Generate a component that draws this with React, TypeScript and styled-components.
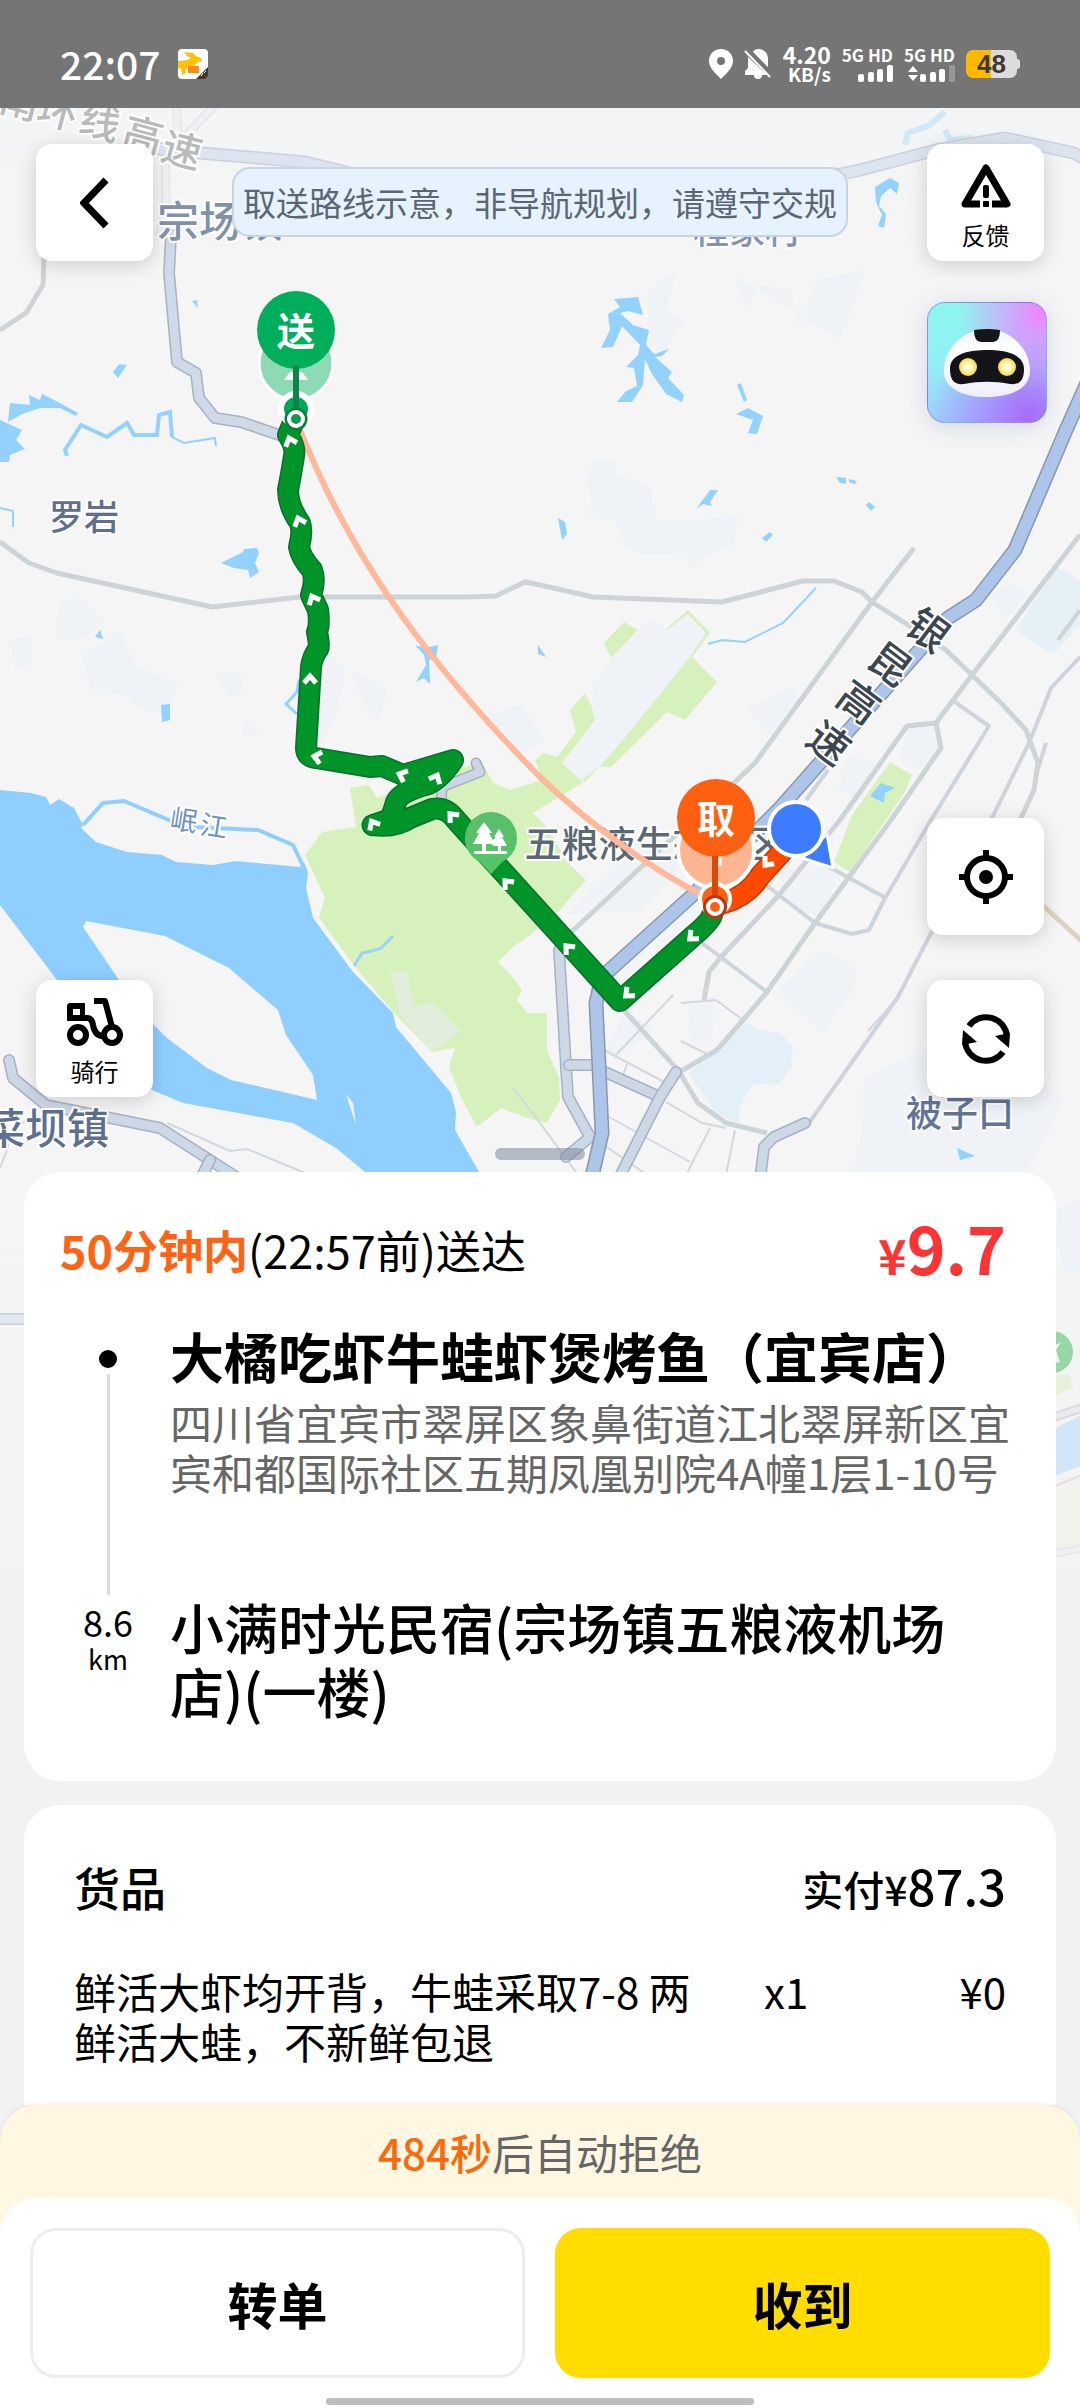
import React from "react";
import styled, { createGlobalStyle, css } from "styled-components";

const sans = `"Noto Sans CJK SC", "Noto Sans", sans-serif`;

const GlobalStyle = createGlobalStyle`
  *, *::before, *::after { box-sizing: border-box; }
  body { margin: 0; background: #f2f2f2; color: #000; font-family: ${sans}; }
  button { font-family: inherit; color: inherit; border: 0; padding: 0; cursor: pointer; }
  h1, h2, p, ol { margin: 0; padding: 0; font-weight: inherit; }
  svg { display: block; }
`;

/* ---------- frame ---------- */

const Page = styled.div`
  position: relative;
  display: flex;
  flex-direction: column;
  min-height: 100vh;
  overflow: hidden;
`;

const StatusBar = styled.header`
  position: relative;
  display: flex;
  align-items: center;
  justify-content: space-between;
  height: 108px;
  padding: 20px 60px 0;
  background: #757575;
  color: #fff;
`;

const StatusGroup = styled.div<{ $gap: number }>`
  display: flex;
  align-items: center;
  gap: ${(p) => p.$gap}px;
`;

const Clock = styled.time`
  margin-top: -3px;
  font-size: 39px;
  line-height: 40px;
  font-weight: 500;
`;

const Speed = styled.div`
  display: flex;
  flex-direction: column;
  align-items: flex-end;
  font-weight: 700;
  font-size: 19px;
  line-height: 20px;
`;

const SpeedValue = styled.span`
  font-size: 23px;
`;

const Signal = styled.div`
  display: flex;
  flex-direction: column;
  align-items: flex-end;
  gap: 2px;
  font-size: 17px;
  line-height: 16px;
  font-weight: 700;
`;

const Battery = styled.div`
  position: relative;
  width: 51px;
  height: 28px;
  margin-right: 3px;
  border-radius: 7px;
  background: linear-gradient(90deg, #ffb800 50%, #dcdcdc 50%);
  color: #3d3a33;
  font: 700 26px/28px "Liberation Sans", sans-serif;
  text-align: center;

  &::after {
    content: "";
    position: absolute;
    right: -3px;
    top: 9px;
    width: 3px;
    height: 10px;
    border-radius: 0 3px 3px 0;
    background: #dcdcdc;
  }
`;

/* ---------- map ---------- */

const MapCanvas = styled.svg`
  position: absolute;
  top: 108px;
  left: 0;
  width: 100%;
  height: 1600px;
`;

const MapLabel = styled.text<{ $size: number; $tone: string; $weight?: number }>`
  font-family: ${sans};
  font-size: ${(p) => p.$size}px;
  font-weight: ${(p) => p.$weight ?? 500};
  fill: ${(p) => p.$tone};
  stroke: #fff;
  stroke-width: 4px;
  stroke-linejoin: round;
  paint-order: stroke;
  text-anchor: middle;
`;

const PinLabel = styled.text`
  font-family: ${sans};
  font-size: 38px;
  font-weight: 700;
  fill: #fff;
  text-anchor: middle;
`;

const MapControls = styled.section`
  position: relative;
  display: flex;
  justify-content: space-between;
  height: 1064px;
  padding: 36px 33px 12px 36px;
`;

const ControlColumn = styled.div`
  display: flex;
  flex-direction: column;
  justify-content: space-between;
  padding-bottom: 63px;
`;

const ControlStack = styled.div<{ $gap: number }>`
  display: flex;
  flex-direction: column;
  gap: ${(p) => p.$gap}px;
`;

const MapCentre = styled.div`
  display: flex;
  flex-direction: column;
  align-items: center;
  justify-content: space-between;
  padding-top: 23px;
`;

const Notice = styled.p`
  padding: 0 9px;
  border: 2px solid #c6d5e3;
  border-radius: 18px;
  background: #e6f3fe;
  color: #5b6675;
  font-size: 33px;
  line-height: 66px;
  white-space: nowrap;
`;

const DragHandle = styled.div`
  width: 90px;
  height: 12px;
  border-radius: 6px;
  background: rgba(112, 128, 145, 0.5);
`;

const MapButton = styled.button<{ $labelled?: boolean }>`
  display: flex;
  flex-direction: column;
  align-items: center;
  justify-content: center;
  width: 117px;
  height: 117px;
  border-radius: 16px;
  background: #fff;
  box-shadow: 0 4px 20px rgba(0, 0, 0, 0.16);
  font-size: 24px;
  line-height: 30px;
  ${(p) =>
    p.$labelled &&
    css`
      justify-content: flex-start;
      gap: 10px;
      padding-top: 18px;
    `}
`;

const AssistantButton = styled.button`
  display: flex;
  align-items: center;
  justify-content: center;
  width: 120px;
  height: 121px;
  border: 1px solid rgba(110, 120, 220, 0.55);
  border-radius: 18px;
  background:
    radial-gradient(circle at 95% 8%, #ee84ff 0%, rgba(238, 132, 255, 0) 52%),
    radial-gradient(circle at 85% 95%, #a86cfb 0%, rgba(168, 108, 251, 0) 65%),
    linear-gradient(170deg, #8df8ec 0%, #93eef6 45%, #a3c4ff 100%);
  box-shadow: 0 4px 24px rgba(90, 110, 160, 0.2);
`;

/* ---------- cards ---------- */

const OrderCard = styled.section`
  position: relative;
  margin: 0 24px 24px;
  padding: 44px 46px 58px 36px;
  border-radius: 36px;
  background: #fff;
`;

const OrderHead = styled.div`
  display: flex;
  align-items: center;
  justify-content: space-between;
  height: 68px;
  margin-bottom: 38px;
  padding-right: 4px;
`;

const Deadline = styled.p`
  font-size: 45px;
  line-height: 60px;
`;

const DeadlineMark = styled.strong`
  color: #ff6313;
  font-weight: 700;
`;

const Fee = styled.p`
  color: #fc3434;
  font-weight: 700;
  font-size: 66px;
  line-height: 68px;
`;

const FeeSign = styled.span`
  font-size: 48px;
`;

const Route = styled.ol`
  list-style: none;
`;

const Stop = styled.li`
  display: grid;
  grid-template-columns: 96px 1fr;
  column-gap: 14px;
`;

const Rail = styled.div`
  display: flex;
  flex-direction: column;
  align-items: center;
`;

const RailDot = styled.span`
  width: 18px;
  height: 18px;
  margin: 28px 0 6px;
  border-radius: 50%;
  background: #000;
`;

const RailLine = styled.span`
  flex: 1;
  width: 3px;
  background: #dcdcdc;
`;

const Distance = styled.span`
  padding-top: 6px;
  font-size: 36px;
  line-height: 40px;
`;

const DistanceUnit = styled.span`
  font-size: 27px;
  line-height: 36px;
`;

const PickupBody = styled.div`
  padding-bottom: 98px;
`;

const PickupName = styled.h1`
  margin-bottom: 7px;
  font-size: 54px;
  line-height: 68px;
  font-weight: 700;
`;

const PickupAddress = styled.p`
  color: #666;
  font-size: 42px;
  line-height: 50px;
`;

const DropName = styled.h2`
  font-size: 54px;
  line-height: 64px;
  font-weight: 500;
`;

const GoodsCard = styled.section`
  position: relative;
  flex: 1;
  margin: 0 24px;
  padding: 50px 50px 24px 50px;
  border-radius: 36px 36px 0 0;
  background: #fff;
`;

const GoodsHead = styled.div`
  display: flex;
  align-items: baseline;
  justify-content: space-between;
  margin-bottom: 48px;
  font-weight: 500;
  line-height: 60px;
`;

const GoodsTitle = styled.h2`
  font-size: 46px;
`;

const Paid = styled.p`
  font-size: 41px;
`;

const PaidAmount = styled.span`
  font-size: 49px;
`;

const GoodsTable = styled.table`
  width: 100%;
  border-collapse: collapse;
  font-size: 42px;
  line-height: 50px;
  text-align: left;

  td {
    padding: 0;
    vertical-align: top;
  }
`;

const NameCell = styled.td`
  width: 690px;

  && {
    padding-right: 50px;
  }
`;

const PriceCell = styled.td`
  text-align: right;
`;

/* ---------- footer ---------- */

const Footer = styled.footer`
  position: relative;
  border-radius: 36px 36px 0 0;
  background: #fff7e1;
  box-shadow: 0 -2px 4px rgba(0, 0, 0, 0.05);
`;

const Countdown = styled.p`
  color: #666;
  font-size: 42px;
  line-height: 93px;
  text-align: center;
`;

const CountdownTime = styled.span`
  color: #fa6a0d;
  font-weight: 500;
`;

const Actions = styled.div`
  display: grid;
  grid-template-columns: 1fr 1fr;
  gap: 0 30px;
  padding: 30px 30px 3px;
  border-radius: 36px 36px 0 0;
  background: #fff;
`;

const ActionButton = styled.button<{ $primary?: boolean }>`
  height: 150px;
  border-radius: 26px;
  background: ${(p) => (p.$primary ? "#ffdd00" : "#fff")};
  box-shadow: ${(p) => (p.$primary ? "none" : "inset 0 0 0 3px #ededed")};
  font-size: 50px;
  font-weight: 700;
`;

const HomeBar = styled.div`
  grid-column: 1 / -1;
  justify-self: center;
  width: 42%;
  height: 7px;
  margin-top: 20px;
  border-radius: 4px;
  background: #bdbdbd;
`;

/* ---------- icons ---------- */

const AppBadge = () => (
  <svg width="30" height="30" viewBox="0 0 30 30" aria-hidden="true">
    <rect width="30" height="30" rx="4" fill="#fff" />
    <path d="M0 12 L9 11 13 9 9 7 6 3 15 4 18 7 23 9 24 12 20 13 17 16 10 19 7 21 8 24 4 26 3 20 0 19Z" fill="#ffc20a" />
    <rect x="10" y="17" width="11" height="7" fill="#ff8a17" />
    <path d="M30 18 V26 a4 4 0 0 1 -4 4 H18Z" fill="#4a3326" />
    <path d="M23 27 l2-3 M26 24 l2-2" stroke="#fff" strokeWidth="1" />
  </svg>
);

const PlaceIcon = () => (
  <svg width="24" height="30" viewBox="0 0 24 30" aria-hidden="true">
    <path
      fillRule="evenodd"
      d="M12 0C5 0 0 5 0 12c0 7 7 13 12 18 5-5 12-11 12-18C24 5 19 0 12 0Zm0 8a4 4 0 1 1 0 8 4 4 0 0 1 0-8Z"
      fill="#fff"
    />
  </svg>
);

const MutedIcon = () => (
  <svg width="28" height="30" viewBox="0 0 28 30" aria-hidden="true">
    <path d="M14 0c6 0 10 4 10 10v8L9 3c1-2 3-3 5-3ZM4 8l19 18h-5a4 4 0 0 1-8 0H1v-4l3-3Z" fill="#fff" />
    <path d="M1 2 L26 28" stroke="#fff" strokeWidth="2" />
  </svg>
);

const SignalBars = ({ arrows }: { arrows?: boolean }) => (
  <svg width="48" height="17" viewBox="0 0 48 17" aria-hidden="true">
    <g fill="#fff">
      <rect x="13" y="9" width="6" height="8" rx="2" />
      <rect x="23" y="7" width="6" height="10" rx="2" />
      <rect x="32" y="4" width="6" height="13" rx="2" />
      <rect x="42" y="0" width="6" height="17" rx="2" opacity={arrows ? 0.25 : 1} />
      {arrows && <path d="M6 1 L11 7 H1Z M6 16 L1 10 H11Z" />}
    </g>
  </svg>
);

const BackIcon = () => (
  <svg width="30" height="52" viewBox="0 0 30 52" aria-hidden="true">
    <path d="M26 3 L4 26 26 49" fill="none" stroke="#000" strokeWidth="7" />
  </svg>
);

const FeedbackIcon = () => (
  <svg width="52" height="48" viewBox="0 0 52 48" aria-hidden="true">
    <path d="M20 42 H5 L26 6 47 42 H32" fill="none" stroke="#000" strokeWidth="7" strokeLinejoin="round" />
    <rect x="23" y="23" width="6" height="13" rx="2" />
    <rect x="23" y="39" width="6" height="6" rx="1" />
  </svg>
);

const ScooterIcon = () => (
  <svg width="56" height="48" viewBox="0 0 56 48" aria-hidden="true">
    <path fillRule="evenodd" d="M2 5 H18 V23 H0 V7Z M6 11 V17 H13 V11Z" />
    <g fill="none" stroke="#000" strokeWidth="6">
      <circle cx="11" cy="37" r="8" />
      <circle cx="45" cy="37" r="8" />
      <path d="M27 3 H38 L45 29" strokeLinejoin="round" />
      <path d="M16 20 H20 Q25 20 26 27 Q28 39 38 38" />
    </g>
  </svg>
);

const LocateIcon = () => (
  <svg width="54" height="54" viewBox="-27 -27 54 54" aria-hidden="true">
    <circle r="19" fill="none" stroke="#000" strokeWidth="6" />
    <circle r="7" />
    <path d="M0 -27 V-19 M0 19 V27 M-27 0 H-19 M19 0 H27" stroke="#000" strokeWidth="6" />
  </svg>
);

const RefreshIcon = () => (
  <svg width="50" height="50" viewBox="-25 -25 50 50" aria-hidden="true">
    {[0, 180].map((turn) => (
      <g key={turn} transform={`rotate(${turn})`}>
        <path d="M-17 -13 A21 21 0 0 1 21 -3" fill="none" stroke="#000" strokeWidth="6" />
        <path d="M9 -3 L24 -6 23 9Z" />
      </g>
    ))}
  </svg>
);

const RobotIcon = () => (
  <svg width="88" height="68" viewBox="0 0 88 68" aria-hidden="true">
    <defs>
      <radialGradient id="eye">
        <stop offset="0.3" stopColor="#fffde0" />
        <stop offset="1" stopColor="#f8da3c" />
      </radialGradient>
      <linearGradient id="head" x2="0" y2="1">
        <stop offset="0" stopColor="#eef4ff" />
        <stop offset="0.3" stopColor="#fff" />
        <stop offset="1" stopColor="#f0eeff" />
      </linearGradient>
    </defs>
    <path d="M44 0C66 0 86 18 87 40c1 19-18 28-43 28S0 59 1 40C2 18 22 0 44 0Z" fill="url(#head)" />
    <path d="M31 1 Q44 -1 57 1 Q57 13 50 13 H38 Q31 13 31 1Z" fill="#15161a" />
    <path d="M44 21C60 21 81 24 81 40c0 12-5 16-14 15-16-3-30-3-46 0C12 56 7 52 7 40c0-16 21-19 37-19Z" fill="#141418" />
    <circle cx="25" cy="38" r="9" fill="url(#eye)" />
    <circle cx="64" cy="38" r="9" fill="url(#eye)" />
  </svg>
);

/* ---------- map drawing ---------- */

type RoadProps = { d: string; w: number; fill: string; edge: string };

const Road = ({ d, w, fill, edge }: RoadProps) => (
  <g fill="none" strokeLinejoin="round" strokeLinecap="round">
    <path d={d} stroke={edge} strokeWidth={w} />
    <path d={d} stroke={fill} strokeWidth={w - 3} />
  </g>
);

const minorRoads = [
  "M44 255 L43 285 26 313 0 330",
  "M0 542 L29 563 57 573 212 607 300 597 465 597 496 596 525 582 540 585 593 597 722 602 803 581 834 581 862 592 872 602 905 623 946 650 972 675 1001 703 1026 730 1038 763 1034 790 1020 820",
  "M914 548 L872 602 755 763 735 782 667 843 566 937",
  "M1080 535 L972 675 936 723 941 748 891 820 815 923 767 992 743 1020 717 1050 678 1073",
  "M621 1007 L678 1070 698 1103 726 1123 767 1133",
  "M936 723 L907 726 840 820 779 895 721 957 709 972 704 1000",
];

const lanes = [
  "M955 702 L989 726 931 820 884 900 869 930 852 934 815 923 779 895 760 880",
  "M1080 657 L1051 688 1029 743 991 820 931 933 898 997 809 1123",
  "M1046 743 L1036 775",
  "M702 943 L767 992",
  "M829 867 L886 898",
  "M828 770 L806 800",
  "M1058 640 L1080 610",
];

const alleys = [
  "M673 995 L616 1055",
  "M681 1003 L716 1000 743 1020",
  "M681 1041 L709 1055",
  "M604 1050 L664 1082",
  "M627 1064 L622 1078",
  "M666 1102 L702 1123 726 1128",
  "M710 1128 L686 1175",
  "M735 1130 L726 1175",
  "M609 1117 L690 1162",
  "M604 1145 L647 1175",
  "M540 1123 L578 1175",
  "M513 1088 L540 1123",
  "M167 1123 L230 1151 247 1149 310 1175",
  "M0 1168 L7 1150 12 1130 30 1118",
  "M900 995 L868 1031",
];

const trunkRoads = [
  "M559 950 L566 1067 568 1097 590 1137 566 1157",
  "M569 1065 L593 1065",
  "M605 1072 L660 1097",
  "M676 1072 L660 1097 618 1180",
  "M760 1180 L764 1147 774 1137 805 1123",
  "M9 1060 L13 1078 46 1105 160 1128 238 1178",
  "M210 1160 L200 1180",
];

const ponds = [
  "M0 420 L22 430 16 440 25 449 10 455 9 462 0 462Z",
  "M10 403 L30 405 29 395 40 400 42 394 58 402 78 413 76 416 60 408 40 408 22 414 8 422Z",
  "M113 372 L119 364 127 365 118 378Z",
  "M221 563 L243 552 244 549 257 548 259 553 255 563 259 572 250 578 248 570 234 568Z",
  "M415 645 L425 648 438 645 436 658 429 660 430 684 424 678 416 682 426 665 424 655Z",
  "M161 705 L170 704 170 720 162 722Z",
  "M95 637 L100 630 103 639Z",
  "M192 301 L197 300 198 308Z",
  "M614 299 L638 297 643 315 628 311 620 313 633 325 649 330 646 345 654 354 669 349 662 356 655 357 672 372 668 378 684 395 682 402 666 394 652 374 645 359 643 385 632 402 617 402 626 391 637 386 634 368 626 367 638 355 640 345 622 326 613 347 601 348 610 330 608 314 620 307Z",
  "M736 414 L748 408 763 416 757 434 748 433 753 420Z",
  "M737 385 L741 383 747 400 744 402Z",
  "M696 509 L710 490 718 490 710 502 712 506 703 504Z",
  "M836 477 L846 478 846 484 840 483Z M849 479 L857 481 855 484 849 482Z",
  "M866 505 L869 502 875 507 871 511Z",
  "M762 538 L770 532 773 535 766 542Z",
  "M558 518 L565 522 567 534 562 540Z",
  "M875 187 L890 178 899 183 897 194 890 188 881 196 879 206 886 214 884 228 878 226 882 215 876 202Z",
  "M957 1148 L975 1156 960 1160Z",
  "M538 645 L546 657 538 654Z",
];

const blocks = [
  "M595 460 L615 460 617 475 650 485 655 522 700 520 738 515 735 545 700 557 692 570 685 553 640 555 625 545 615 520 588 515 592 500 585 480Z",
  "M650 290 L675 272 667 310 684 320 665 350 650 345Z M735 275 L745 310 760 285 790 290 800 330 815 280 865 270 855 300 840 340Z",
  "M82 655 L120 630 135 665 180 685 165 715 140 708 125 695 90 690Z",
  "M60 600 L78 598 105 620 80 640 58 640Z M10 640 L30 635 30 665 15 668Z",
  "M330 655 L345 670 335 720 315 750 322 690Z M350 670 L388 690 380 720 365 705Z",
  "M215 675 L240 672 245 690 230 697Z M245 720 L262 735 243 735Z",
  "M490 715 L520 705 545 740 515 760Z",
  "M747 708 L795 687 800 700 770 735Z",
  "M990 595 L1010 583 1028 592 1005 620Z",
  "M848 755 L880 765 860 800 838 790Z M912 722 L938 725 940 750 920 770 900 755Z",
  "M822 950 L853 967 855 987 822 1033 778 990Z",
  "M688 1005 L714 1000 712 1045 690 1040Z M625 1010 L655 1030 615 1060 607 1050Z",
  "M780 870 L835 865 835 885 818 918 785 900Z",
  "M566 915 L640 845 700 850 640 910Z",
  "M864 1077 L927 1050 965 1075 1040 1080 1062 1100 1050 1130 1020 1180 850 1180 860 1140Z",
  "M1056 1210 L1080 1200 1080 1275 1062 1270Z",
];

const chevrons: Array<[number, number, number]> = [
  [290, 441, -20],
  [299, 521, -20],
  [313, 599, -25],
  [310, 679, 0],
  [317, 757, -78],
  [402, 775, -68],
  [436, 778, 25],
  [373, 824, -30],
  [452, 816, -42],
  [507, 883, -42],
  [568, 948, -42],
  [628, 994, -132],
  [692, 937, -132],
];

const riverPath =
  "M0 790 L31 793 46 797 50 805 59 799 74 808 83 825 81 828 96 842 127 852 162 855 176 862 213 865 236 861 300 867 304 862 308 872 306 888 313 918 353 972 393 1013 396 1027 451 1093 456 1112 455 1130 479 1172 490 1200 400 1200 365 1172 336 1148 293 1123 183 1103 152 1090 57 980 0 905Z";

const parkPath =
  "M350 788 L369 785 377 798 440 775 482 762 493 783 510 790 543 780 535 760 543 753 557 757 576 732 570 710 585 693 592 707 595 720 562 763 583 782 533 813 547 827 568 863 586 880 557 913 530 935 513 947 498 962 513 977 522 990 517 1000 527 1013 547 1013 547 1050 559 1077 560 1100 547 1123 527 1118 501 1108 477 1127 461 1097 449 1067 455 1048 432 1052 394 1013 355 967 319 918 325 898 305 855 322 832 356 827Z";

const routePath =
  "M295 418 L288 435 Q296 447 294 456 Q291 475 288 490 Q288 506 300 523 Q303 532 299 547 Q301 558 312 570 Q316 580 311 595 L318 610 Q320 625 317 632 Q320 647 318 649 Q312 658 311 667 L306 748 Q306 757 316 758 L370 767 382 766 403 775 453 760 Q440 780 426 785 Q400 792 396 802 Q392 818 388 820 Q370 826 373 825 Q395 828 410 818 L432 809 Q446 806 456 820 L620 1001 692 937 Q710 922 712 915";

const MapDrawing = () => (
  <MapCanvas viewBox="0 108 1080 1600" preserveAspectRatio="xMidYMin slice" role="img" aria-label="取送路线地图">
    <defs>
      <linearGradient id="land" x2="0" y2="1">
        <stop offset="0" stopColor="#f3f4f5" />
        <stop offset="0.1" stopColor="#f5f5f5" />
        <stop offset="0.66" stopColor="#f5f5f5" />
        <stop offset="0.95" stopColor="#f2f2f2" />
      </linearGradient>
      <linearGradient id="tree" x2="0" y2="1">
        <stop offset="0" stopColor="#5bbd6c" />
        <stop offset="1" stopColor="#53c766" />
      </linearGradient>
    </defs>
    <rect y="108" width="1080" height="1600" fill="url(#land)" />

    <g fill="#eff2f6">
      {blocks.map((d) => (
        <path key={d} d={d} />
      ))}
    </g>
    <path d="M1057 568 L1080 580 1080 625 1053 655 1015 630Z" fill="#e5f0f7" />
    <path d="M747 1022 L760 1030 781 1033 793 1047 791 1067 778 1085 753 1083 740 1107 738 1123 716 1113 688 1073 722 1047Z" fill="#e4f0f7" />

    <path d={riverPath} fill="#8fcfff" />
    <path
      d="M86 921 L165 936 229 968 278 1010 286 1035 313 1075 317 1100 231 1080 207 1068 167 1038 153 1024 119 980 83 927Z M346 1094 L353 1103 356 1125Z"
      fill="#f5f5f5"
    />
    <path d="M83 825 L103 803 124 801 169 820 193 827 258 830 293 845 304 868" fill="none" stroke="#8fcfff" strokeWidth="4" />

    <g fill="#d7f1bd">
      <path d={parkPath} />
      <path d="M604 643 L624 622 638 630 611 658Z" />
      <path d="M667 628 L688 610 710 633 692 657 717 682 685 720 667 712 611 767 599 767 585 782 575 775Z" />
      <path d="M890 762 L912 775 905 792 850 872 834 862 852 815Z" />
    </g>
    <path d="M652 618 L667 630 688 614 706 633 690 657 623 740 599 767 581 780 562 763 595 720 592 687 614 657Z" fill="#eff2f7" />
    <path d="M391 972 L406 970 414 1007 432 1002 461 1031 432 1052 400 1015Z" fill="#e0eedb" />
    <path d="M354 966 L362 953 380 949 393 936" fill="none" stroke="#99d2f2" strokeWidth="3" />

    <g fill="#93d2fd">
      {ponds.map((d) => (
        <path key={d} d={d} />
      ))}
      <path d="M881 783 L895 788 885 793 884 803 870 796Z" />
    </g>
    <g fill="none" stroke="#93d2fd">
      <path d="M67 456 L65 450 81 425 107 437 127 423 134 435 157 435 159 415 170 412 172 437" strokeWidth="4" />
      <path d="M172 437 L184 443 215 438 216 446 M0 508 L13 511 13 527 M816 588 L783 623 745 642 722 640 708 644" strokeWidth="2" />
      <path d="M299 680 L297 692 286 704 297 714" strokeWidth="3" />
      <path d="M905 145 L908 133 928 126 945 112 M945 130 L950 140 972 138" strokeWidth="6" opacity="0.35" />
    </g>

    <g fill="none" stroke="#d3d7e0" strokeWidth="2">
      {alleys.map((d) => (
        <path key={d} d={d} />
      ))}
    </g>
    <g fill="none" stroke="#cdd4db" strokeWidth="4" strokeLinejoin="round">
      {lanes.map((d) => (
        <path key={d} d={d} />
      ))}
    </g>
    <g fill="none" stroke="#cdd4d8" strokeWidth="5" strokeLinejoin="round">
      {minorRoads.map((d) => (
        <path key={d} d={d} />
      ))}
    </g>
    <path d="M1040 903 L1084 943" stroke="#ddd3c2" strokeWidth="5" />

    <g opacity="0.5">
      <Road d="M176 100 L178 140 M216 104 L182 140 M165 150 L166 200 160 235" w={9} fill="#eceef2" edge="#d5d9df" />
    </g>
    <Road d="M150 148 L200 153 305 162 420 190 600 205 740 195 860 170 936 150 1005 138 1074 153 1090 162" w={13} fill="#dde4f0" edge="#cbd1dc" />
    <Road d="M171 235 L169 273 177 362 196 373 199 398 215 418 241 422 285 437" w={12} fill="#cfdae8" edge="#a7b2c2" />
    <Road d="M476 763 L480 772 442 787 441 810" w={11} fill="#cdd5e4" edge="#a5adbd" />
    {trunkRoads.map((d) => (
      <Road key={d} d={d} w={12} fill="#cdd8e7" edge="#a5b2c6" />
    ))}
    <Road
      d="M1092 372 L1066 430 1015 550 976 600 948 618 781 807 695 893 602 977 596 1003 599 1067 602 1133 590 1185"
      w={15}
      fill="#adc5e8"
      edge="#8896b0"
    />

    <MapLabel $size={35} $tone="#5f6f8c" x="84" y="530">罗岩</MapLabel>
    <MapLabel $size={42} $tone="#8291aa" x="220" y="237">宗场镇</MapLabel>
    <MapLabel $size={36} $tone="#8594ad" x="747" y="244">程家村</MapLabel>
    <MapLabel $size={42} $tone="#5d7090" x="46" y="1144">菜坝镇</MapLabel>
    <MapLabel $size={36} $tone="#627596" x="960" y="1127">被子口</MapLabel>
    <MapLabel $size={37} $tone="#5c6874" x="654" y="858">五粮液生态景区</MapLabel>
    {([["岷", 184, 820], ["江", 214, 826]] as const).map(([char, x, y]) => (
      <MapLabel key={char} $size={27} $tone="#6f93bd" $weight={400} transform={`translate(${x} ${y}) rotate(9)`} y="10">
        {char}
      </MapLabel>
    ))}
    {([["南", 20, 102], ["环", 58, 112], ["线", 100, 123], ["高", 143, 136], ["速", 182, 151]] as const).map(([char, x, y]) => (
      <MapLabel key={char} $size={40} $tone="#b8babc" transform={`translate(${x} ${y}) rotate(15)`} y="14">
        {char}
      </MapLabel>
    ))}
    {([["银", 928, 630], ["昆", 890, 664], ["高", 859, 702], ["速", 829, 743]] as const).map(([char, x, y]) => (
      <MapLabel key={char} $size={41} $tone="#3b4650" transform={`translate(${x} ${y}) rotate(37)`} y="15">
        {char}
      </MapLabel>
    ))}

    <path d="M298 425 C345 545 415 650 540 777 C590 825 650 868 705 897" fill="none" stroke="#ffb899" strokeWidth="6" />

    <g fill="none" strokeLinejoin="round" strokeLinecap="round">
      <path d="M724 903 Q748 896 760 876 L790 843" stroke="#c23a08" strokeWidth="22" />
      <path d="M724 903 Q748 896 760 876 L790 843" stroke="#ff4a00" strokeWidth="19" />
      <path d={routePath} stroke="#0a6f2e" strokeWidth="22" />
      <path d={routePath} stroke="#009429" strokeWidth="19" />
    </g>
    <g fill="none" stroke="#fff" strokeWidth="5">
      {chevrons.map(([x, y, turn]) => (
        <path key={`${x}-${y}`} d="M-6 4 L0 -3 6 4" transform={`translate(${x} ${y}) rotate(${turn})`} />
      ))}
      <path d="M-6 4 L0 -3 6 4" transform="translate(767 863) rotate(-140)" />
    </g>

    <path d="M491 812 a26 26 0 0 1 26 26 q0 16 -15 24 l-11 12 -11 -12 q-15 -8 -15 -24 a26 26 0 0 1 26 -26Z" fill="url(#tree)" />
    <g fill="#fff">
      <path d="M484 822 L492 833 489 833 495 844 486 844 486 851 482 851 482 844 473 844 479 833 476 833Z" />
      <path d="M499 829 L504 837 502 837 507 846 501 846 501 851 498 851 498 846 494 846 490 843 496 837 494 837Z" />
      <rect x="474" y="851" width="33" height="3" />
    </g>

    <g>
      <path d="M827 834 L833 868 802 858Z" fill="#3d7bff" stroke="#fff" strokeWidth="3" strokeLinejoin="round" />
      <circle cx="796" cy="829" r="27" fill="#3d7bff" stroke="#fff" strokeWidth="4" />
    </g>

    <g>
      <circle cx="296" cy="363" r="37" fill="#8edab5" stroke="#fff" strokeWidth="3" />
      <path d="M284 380 L290 372 302 372 308 380Z" fill="#fff" />
      <circle cx="296" cy="409" r="15" fill="#00a857" stroke="#fff" strokeWidth="6" />
      <circle cx="296" cy="330" r="39" fill="#00ae5b" />
      <PinLabel x="296" y="345">送</PinLabel>
      <path d="M296 366 V410" stroke="#0a8548" strokeWidth="6" />
      <circle cx="296" cy="419" r="8" fill="#0b9a50" stroke="#0a7d41" strokeWidth="7" />
      <circle cx="296" cy="419" r="7" fill="#0b9a50" stroke="#fff" strokeWidth="4" />
    </g>

    <g>
      <circle cx="716" cy="850" r="38" fill="#ffb592" stroke="#fff" strokeWidth="4" />
      <path d="M720 856 V866" stroke="#fff" strokeWidth="3" />
      <circle cx="715" cy="899" r="15" fill="#ff5f10" stroke="#fff" strokeWidth="4" />
      <circle cx="716" cy="818" r="39" fill="#ff5f10" />
      <PinLabel x="716" y="833">取</PinLabel>
      <path d="M715 856 V900" stroke="#d64b0c" strokeWidth="6" />
      <circle cx="715" cy="907" r="9" fill="#ff5f10" stroke="#b23a18" strokeWidth="6" />
      <circle cx="715" cy="907" r="7" fill="#ff5f10" stroke="#fff" strokeWidth="4" />
    </g>

    <Road d="M-5 1319 L60 1319" w={12} fill="#e1e8f0" edge="#c5ccd5" />
    <circle cx="1052" cy="1352" r="21" fill="#96d7a4" />
    <path d="M1050 1348 L1061 1342 1056 1350 1060 1362 1050 1364Z" fill="#e9f6ea" />
    <path d="M1040 1378 L1070 1374 1073 1388 1040 1402Z" fill="#e6f3da" />
    <path d="M1040 1436 L1080 1416 1080 1466 1040 1482Z" fill="#d0e5f7" />
    <Road d="M1040 1422 L1090 1405" w={9} fill="#e8ebef" edge="#d3d7dc" />
    <path d="M1040 1492 L1080 1476" stroke="#e5dfd8" strokeWidth="2" />
    <path d="M1040 1496 L1080 1484 1080 1544 1040 1550Z" fill="#f0f3ea" />
    <Road d="M1040 1556 L1090 1547" w={8} fill="#eff0f2" edge="#e3e5e8" />
  </MapCanvas>
);

/* ---------- screen ---------- */

export default function App() {
  return (
    <>
      <GlobalStyle />
      <Page>
        <MapDrawing />

        <StatusBar>
          <StatusGroup $gap={17}>
            <Clock>22:07</Clock>
            <AppBadge />
          </StatusGroup>
          <StatusGroup $gap={11}>
            <PlaceIcon />
            <MutedIcon />
            <Speed>
              <SpeedValue>4.20</SpeedValue>
              <span>KB/s</span>
            </Speed>
            <Signal>
              5G HD
              <SignalBars />
            </Signal>
            <Signal>
              5G HD
              <SignalBars arrows />
            </Signal>
            <Battery>48</Battery>
          </StatusGroup>
        </StatusBar>

        <MapControls>
          <ControlColumn>
            <MapButton aria-label="返回">
              <BackIcon />
            </MapButton>
            <MapButton $labelled>
              <ScooterIcon />
              骑行
            </MapButton>
          </ControlColumn>
          <MapCentre>
            <Notice>取送路线示意，非导航规划，请遵守交规</Notice>
            <DragHandle />
          </MapCentre>
          <ControlColumn>
            <ControlStack $gap={41}>
              <MapButton $labelled>
                <FeedbackIcon />
                反馈
              </MapButton>
              <AssistantButton aria-label="智能助手">
                <RobotIcon />
              </AssistantButton>
            </ControlStack>
            <ControlStack $gap={45}>
              <MapButton aria-label="定位">
                <LocateIcon />
              </MapButton>
              <MapButton aria-label="刷新">
                <RefreshIcon />
              </MapButton>
            </ControlStack>
          </ControlColumn>
        </MapControls>

        <OrderCard>
          <OrderHead>
            <Deadline>
              <DeadlineMark>50分钟内</DeadlineMark>(22:57前)送达
            </Deadline>
            <Fee>
              <FeeSign>¥</FeeSign>9.7
            </Fee>
          </OrderHead>
          <Route>
            <Stop>
              <Rail>
                <RailDot />
                <RailLine />
              </Rail>
              <PickupBody>
                <PickupName>大橘吃虾牛蛙虾煲烤鱼（宜宾店）</PickupName>
                <PickupAddress>四川省宜宾市翠屏区象鼻街道江北翠屏新区宜宾和都国际社区五期凤凰别院4A幢1层1-10号</PickupAddress>
              </PickupBody>
            </Stop>
            <Stop>
              <Rail>
                <Distance>8.6</Distance>
                <DistanceUnit>km</DistanceUnit>
              </Rail>
              <DropName>小满时光民宿(宗场镇五粮液机场店)(一楼)</DropName>
            </Stop>
          </Route>
        </OrderCard>

        <GoodsCard>
          <GoodsHead>
            <GoodsTitle>货品</GoodsTitle>
            <Paid>
              实付¥<PaidAmount>87.3</PaidAmount>
            </Paid>
          </GoodsHead>
          <GoodsTable>
            <tbody>
              <tr>
                <NameCell>鲜活大虾均开背，牛蛙采取7-8 两鲜活大蛙，不新鲜包退</NameCell>
                <td>x1</td>
                <PriceCell>¥0</PriceCell>
              </tr>
            </tbody>
          </GoodsTable>
        </GoodsCard>

        <Footer>
          <Countdown>
            <CountdownTime>484秒</CountdownTime>后自动拒绝
          </Countdown>
          <Actions>
            <ActionButton>转单</ActionButton>
            <ActionButton $primary>收到</ActionButton>
            <HomeBar />
          </Actions>
        </Footer>
      </Page>
    </>
  );
}
